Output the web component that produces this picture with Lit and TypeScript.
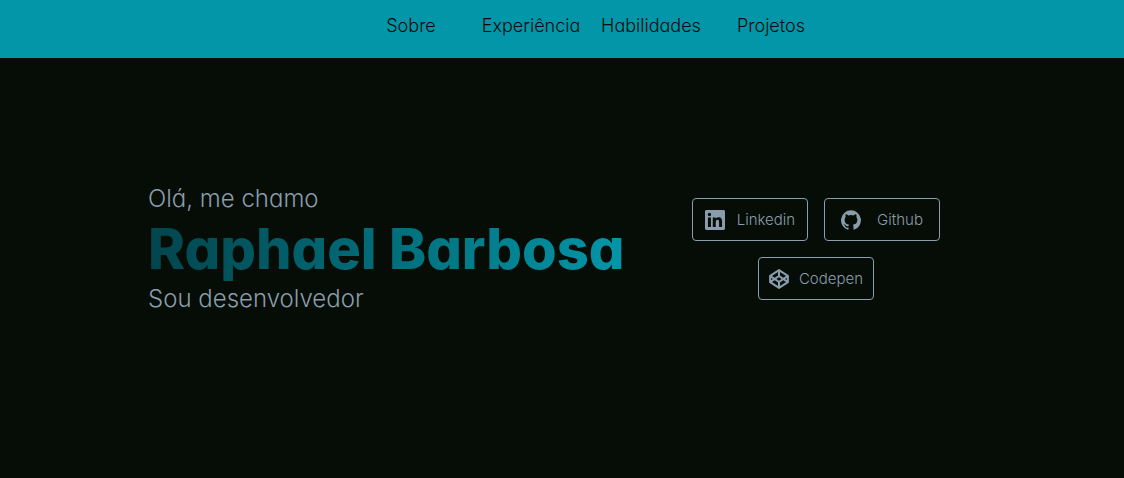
import { LitElement, html, css, svg } from "lit";
import { customElement } from "lit/decorators.js";

const linkedin = svg`<path d="M22.23 0H1.77C.8 0 0 .77 0 1.73v20.54C0 23.23.8 24 1.77 24h20.46c.98 0 1.77-.77 1.77-1.73V1.73C24 .77 23.2 0 22.23 0zM7.12 20.45H3.56V9h3.56v11.45zM5.34 7.43a2.06 2.06 0 1 1 0-4.13 2.06 2.06 0 0 1 0 4.13zm15.11 13.02h-3.55v-5.57c0-1.33-.03-3.04-1.85-3.04-1.86 0-2.14 1.45-2.14 2.94v5.67H9.35V9h3.41v1.56h.05c.48-.9 1.64-1.85 3.37-1.85 3.6 0 4.27 2.37 4.27 5.46v6.28z"/>`;
const github = svg`<path d="M12 .3a12 12 0 0 0-3.8 23.38c.6.12.83-.26.83-.57L9 21.07c-3.34.72-4.04-1.61-4.04-1.61-.55-1.39-1.34-1.76-1.34-1.76-1.08-.74.09-.73.09-.73 1.2.09 1.83 1.24 1.83 1.24 1.08 1.83 2.81 1.3 3.5 1 .1-.78.42-1.31.76-1.61-2.67-.3-5.47-1.33-5.47-5.93 0-1.31.47-2.38 1.24-3.22-.14-.3-.54-1.52.1-3.18 0 0 1-.32 3.3 1.23a11.5 11.5 0 0 1 6.02 0c2.28-1.55 3.29-1.23 3.29-1.23.64 1.66.24 2.88.12 3.18a4.65 4.65 0 0 1 1.23 3.22c0 4.61-2.8 5.63-5.48 5.92.42.36.81 1.1.81 2.22l-.01 3.29c0 .31.2.69.82.57A12 12 0 0 0 12 .3"/>`;
const codepen = svg`<g fill="none" stroke="currentColor" stroke-width="2.5" stroke-linejoin="round"><path d="M12 1.4L22.6 8.2v7.6L12 22.6 1.4 15.8V8.2z"/><path d="M12 1.4v7M12 15.6v7M1.4 8.2L12 15.6l10.6-7.4M1.4 15.8L12 8.4l10.6 7.4"/></g>`;

@customElement("app-root")
export class AppRoot extends LitElement {
  static styles = css`
    :host {
      display: flex;
      flex-direction: column;
      min-height: 100vh;
      background: #060c06;
      color: #8a9dac;
      font-family: Inter, "Liberation Sans", sans-serif;
      font-feature-settings: "cv11" 1;
      font-weight: 300;
    }
    a {
      color: inherit;
      text-decoration: none;
    }
    .bar {
      background: #0396a8;
      color: #060c06;
      padding: 14px 0 20px 58px;
    }
    .menu {
      display: flex;
      justify-content: center;
      list-style: none;
      margin: 0;
      padding: 0;
      font-size: 18px;
      line-height: 24px;
    }
    .menu li {
      width: 120px;
      text-align: center;
    }
    .hero {
      display: grid;
      grid-template-columns: minmax(0, 3fr) minmax(0, 2fr);
      column-gap: 28px;
      align-items: center;
      width: 100%;
      max-width: 828px;
      margin: 0 auto;
      padding-top: 125px;
    }
    .line {
      margin: 0;
      font-size: 24px;
      line-height: 32px;
    }
    .name {
      width: max-content;
      margin: 0;
      font-size: 56px;
      font-weight: 800;
      line-height: 68px;
      white-space: nowrap;
      background: linear-gradient(90deg, #02454d, #0396a8);
      -webkit-background-clip: text;
      background-clip: text;
      color: transparent;
    }
    .links {
      display: flex;
      flex-wrap: wrap;
      justify-content: center;
      gap: 16px;
    }
    .link {
      box-sizing: border-box;
      display: flex;
      align-items: center;
      justify-content: space-evenly;
      width: 116px;
      height: 43px;
      border: 1px solid currentColor;
      border-radius: 4px;
      font-size: 15px;
    }
    .icon {
      width: 20px;
      height: 20px;
      fill: currentColor;
    }
  `;

  render() {
    const menu = ["Sobre", "Experiência", "Habilidades", "Projetos"];
    const links = [
      { label: "Linkedin", icon: linkedin },
      { label: "Github", icon: github },
      { label: "Codepen", icon: codepen },
    ];
    return html`
      <nav class="bar">
        <ul class="menu">
          ${menu.map((m) => html`<li><a href="#${m.toLowerCase()}">${m}</a></li>`)}
        </ul>
      </nav>
      <main class="hero">
        <div>
          <p class="line">Olá, me chamo</p>
          <h1 class="name">Raphael Barbosa</h1>
          <p class="line">Sou desenvolvedor</p>
        </div>
        <div class="links">
          ${links.map(
            (l) => html`<a class="link" href="#${l.label.toLowerCase()}">
              <svg class="icon" viewBox="0 0 24 24" aria-hidden="true">${l.icon}</svg>
              <span>${l.label}</span>
            </a>`
          )}
        </div>
      </main>
    `;
  }
}
